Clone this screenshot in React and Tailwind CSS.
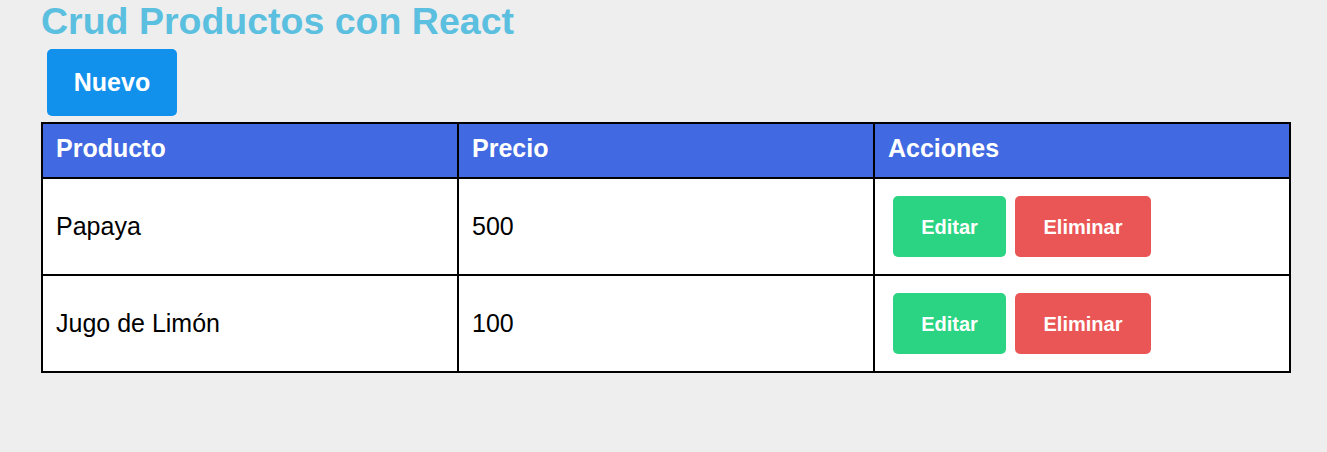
import React from "react";

const productos = [
  { id: 1, nombre: "Papaya", precio: 500 },
  { id: 2, nombre: "Jugo de Limón", precio: 100 },
];

export default function App() {
  return (
    <div className="min-h-[452px] w-full bg-[#eeeeee] pl-[41px] font-['Liberation_Sans',Arial,sans-serif]">
      {/* Title */}
      <h1 className="m-0 h-[42px] text-[37.5px] font-bold leading-[42px] text-[#5bbfdf]">
        Crud Productos con React
      </h1>

      <button className="ml-[6px] mt-[7px] h-[67px] w-[130px] rounded-[5px] bg-[#1190ec] text-[25px] font-bold text-white">
        Nuevo
      </button>

      <table className="mt-[6px] w-[1250px] table-fixed border-collapse border-2 border-black">
        <thead>
          <tr className="h-[55px] bg-[#4169e1] text-white">
            <th className="border-2 border-black px-[13px] pb-[3px] text-left text-[25px] font-bold">Producto</th>
            <th className="border-2 border-black px-[13px] pb-[3px] text-left text-[25px] font-bold">Precio</th>
            <th className="border-2 border-black px-[13px] pb-[3px] text-left text-[25px] font-bold">Acciones</th>
          </tr>
        </thead>
        <tbody className="bg-white">
          {productos.map((p) => (
            <tr key={p.id} className="h-[97px]">
              <td className="border-2 border-black px-[13px] text-[25px] text-black">{p.nombre}</td>
              <td className="border-2 border-black px-[13px] text-[25px] text-black">{p.precio}</td>
              <td className="border-2 border-black px-[18px]">
                <div className="flex gap-[9px]">
                  <button className="h-[61px] w-[113px] rounded-[5px] bg-[#2bd482] text-[20px] font-bold text-white">
                    Editar
                  </button>
                  <button className="h-[61px] w-[136px] rounded-[5px] bg-[#ea5656] text-[20px] font-bold text-white">
                    Eliminar
                  </button>
                </div>
              </td>
            </tr>
          ))}
        </tbody>
      </table>
    </div>
  );
}
